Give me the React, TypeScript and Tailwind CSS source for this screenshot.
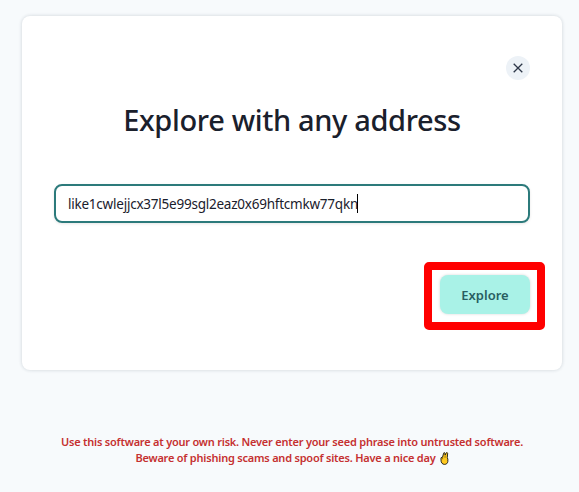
import React from "react";

function CloseIcon() {
  return (
    <svg width="10" height="10" viewBox="0 0 10 10" fill="none" stroke="#2d3748" strokeWidth="1.3" aria-hidden="true">
      <path d="M0.7 0.7 9.3 9.3M9.3 0.7 0.7 9.3" />
    </svg>
  );
}

function VictoryHand() {
  return (
    <svg className="ml-[4px] shrink-0" width="9" height="13" viewBox="0 0 10 13" preserveAspectRatio="none" aria-hidden="true">
      <path
        d="M1.1 8V5.8L2.9 5 4 1.2C4.3.3 5.3.4 5.4 1.3L5.7 3 6.8 1C7.2.1 8.6.5 8.5 1.6L8.1 5.4 8.7 7.2V9.5C8.4 11.4 7 12.4 5 12.4 2.7 12.4 1.1 10.8 1.1 8Z"
        fill="#ffc91f"
        stroke="#1d1d1b"
        strokeWidth="1"
        strokeLinejoin="round"
      />
      <path d="M2.9 5V7.2M5.7 3.2 5.6 5.8" stroke="#4a3a08" strokeWidth="0.6" fill="none" />
    </svg>
  );
}

export default function App() {
  return (
    <main className="h-[492px] w-[579px] overflow-hidden bg-[#f7fafc] pl-[22px] pt-[16px] font-['Noto_Sans','Open_Sans',sans-serif] text-[#1a202c]">
      <section className="flex h-[354px] w-[540px] flex-col rounded-lg bg-white px-8 pt-10 shadow-[0_0_3px_1px_rgba(45,55,72,0.12)]">
        <button aria-label="Close" className="flex size-6 items-center justify-center self-end rounded-full bg-[#edf2f7]">
          <CloseIcon />
        </button>
        <h1 className="mt-[18px] whitespace-nowrap text-center text-[29px] font-medium leading-[44px] tracking-[-0.35px]">
          Explore with any address
        </h1>
        <div className="mt-[42px] flex h-[39px] shrink-0 items-center rounded-lg border-2 border-[#2c7a7b] px-3 text-[13.5px] shadow-[0_1px_3px_rgba(0,0,0,0.1)]">
          <span className="whitespace-nowrap pt-px tracking-[-0.23px]">like1cwlejjcx37l5e99sgl2eaz0x69hftcmkw77qkn</span>
          <span className="-ml-px h-[19px] w-px bg-black" />
        </div>
        <div className="-mr-[15px] mt-[39px] h-[68px] w-[121px] self-end rounded-[5px] border-8 border-[#ff0000] py-[5px] pl-[8px]">
          <button className="flex h-[39px] w-[90px] items-center justify-center rounded-lg bg-[#a9f2e7] pt-[2px] text-[13px] font-semibold text-[#285e61] shadow-[0_0_3px_rgba(0,0,0,0.16)]">
            Explore
          </button>
        </div>
      </section>
      <footer className="mt-[64px] w-[540px] text-center text-[11px] font-semibold leading-4 text-[#c53030]">
        <p className="whitespace-nowrap tracking-[-0.22px]">
          Use this software at your own risk. Never enter your seed phrase into untrusted software.
        </p>
        <p className="flex items-center justify-center whitespace-nowrap tracking-[-0.22px]">
          Beware of phishing scams and spoof sites. Have a nice day
          <VictoryHand />
        </p>
      </footer>
    </main>
  );
}
